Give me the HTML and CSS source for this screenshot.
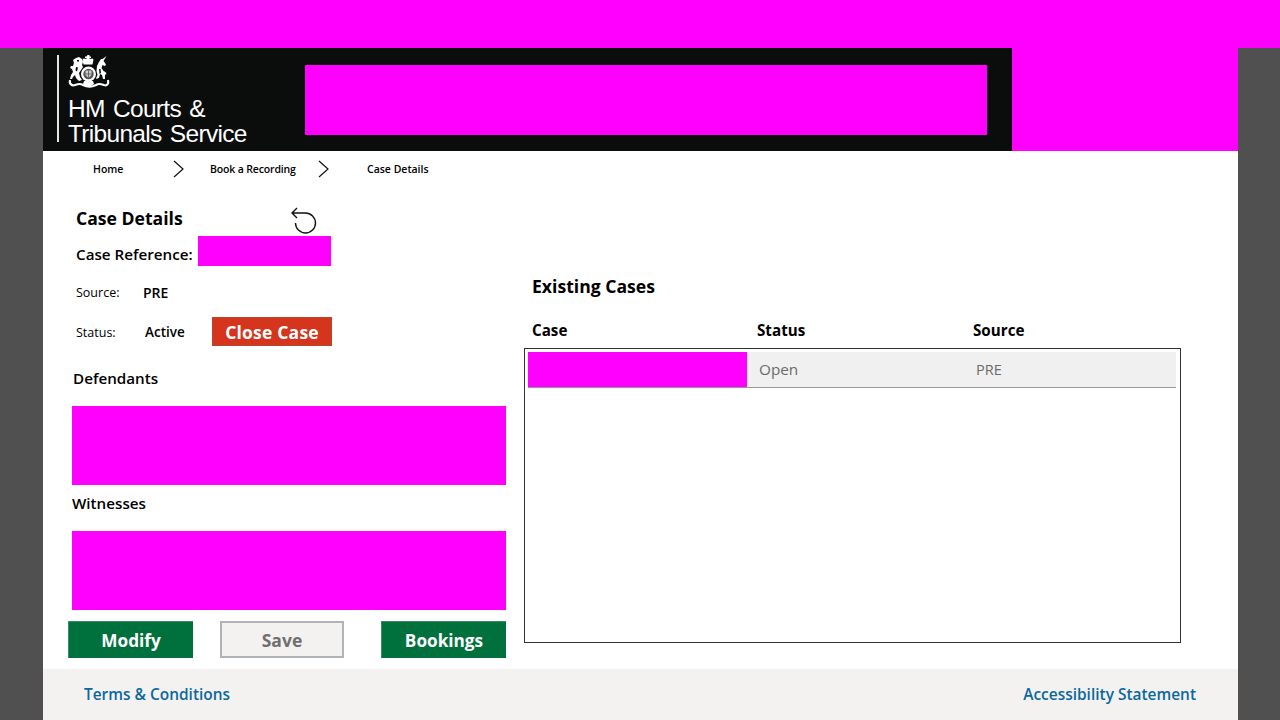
FILE: index.html
```html
<!DOCTYPE html>
<html lang="en">
<head>
  <meta charset="UTF-8" />
  <meta name="viewport" content="width=device-width, initial-scale=1" />
  <title>Case Details</title>
  <link rel="stylesheet" href="styles.css">
</head>
<body>
  <div class="topbar"></div>
  <div class="page">
    <header class="header">
      <div class="brand">
        <div class="brand-rule"></div>
        <div class="brand-text">
          <svg class="crest" viewBox="0 0 42 36" aria-hidden="true">
            <!-- crown -->
            <path fill="#fff" d="M19.500 0h2v1.500h1.500v1.500h-1.500v1l3-.5 1 1-1 5h-9l-1-5 1-1 3 .5v-1h-1.500v-1.500h1.500z"/>
            <!-- garter and shield -->
            <circle cx="20.500" cy="19" r="7.500" fill="#fff"/>
            <circle cx="20.500" cy="19" r="5.200" fill="#555"/>
            <path fill="#ccc" d="M17.500 15.500h6v4.500l-3 3-3-3z"/>
            <path fill="none" stroke="#333" stroke-width=".6" d="M20.500 15.500v7.500M17.500 19h6"/>
            <!-- lion -->
            <path fill="#fff" d="M8 3l3-1 3 2 1 3-1 3 1 2-2 3-2 3 1 4 2 3-3 1-3-3-1-3-2 2-1 2h-2l1-4 2-3-1-3-2-1 1-2 2 0 1-3-1-3z"/>
            <path fill="#0b0c0c" d="M9 5h2v1.500h-2zM8 12l2 .5-1 4-1.500-1z"/>
            <!-- unicorn -->
            <path fill="#fff" d="M38.500 1l-3 5 1.500 2 1 2-1.500 1-2-1-1 3 2 3 2 1 1 2-1.500 1 0 4-2 0-1-4-2-1-1 4-3 1 .5-2 1-2-1-4 .5-5 2-4 2-3 1.500 0z"/>
            <path fill="#0b0c0c" d="M31 14l1.500 0 .5 4-1.500 1z"/>
            <!-- ribbon -->
            <path fill="none" stroke="#fff" stroke-width="2.200" d="M2 25c-1 4 2 6 5 5 3-1 5-2 8 0 4 2 9 2 13 0 3-2 5-1 8 0 3 1 5-1 4-5"/>
            <path fill="#fff" d="M16 26h9l1 3-3 2h-5l-3-2z"/>
          </svg>
          <div class="brand-name">HM Courts &amp;<br>Tribunals Service</div>
        </div>
        <div class="mask mask-title"></div>
      </div>
      <div class="mask header-mask"></div>
    </header>

    <nav class="crumbs">
      <span class="crumb crumb-home">Home</span>
      <svg class="chevron chevron-one" viewBox="0 0 11 18"><path d="M1 1l9 8-9 8" /></svg>
      <span class="crumb crumb-book">Book a Recording</span>
      <svg class="chevron chevron-two" viewBox="0 0 11 18"><path d="M1 1l9 8-9 8" /></svg>
      <span class="crumb crumb-case">Case Details</span>
    </nav>

    <main class="content">
      <section class="details">
        <div class="title-row">
          <h1 class="title title-details">Case Details</h1>
          <svg class="undo" viewBox="0 0 26 27"><path d="M6 1L1 6l5 5M1 6h13.500a10 10 0 1 1-10 10" /></svg>
        </div>
        <div class="ref-row">
          <span class="ref-label">Case Reference:</span>
          <div class="mask mask-ref"></div>
        </div>
        <div class="info-row info-source">
          <span class="info-label">Source:</span>
          <span class="info-value">PRE</span>
        </div>
        <div class="info-row info-status">
          <span class="info-label">Status:</span>
          <span class="info-value info-active">Active</span>
          <button class="btn btn-close">Close Case</button>
        </div>
        <h2 class="group-title group-defendants">Defendants</h2>
        <div class="mask mask-people"></div>
        <h2 class="group-title group-witnesses">Witnesses</h2>
        <div class="mask mask-people"></div>
        <div class="actions">
          <button class="btn btn-green">Modify</button>
          <button class="btn btn-save">Save</button>
          <button class="btn btn-green">Bookings</button>
        </div>
      </section>

      <section class="cases">
        <h2 class="title">Existing Cases</h2>
        <div class="case-cols">
          <span class="col-case">Case</span>
          <span class="col-status">Status</span>
          <span>Source</span>
        </div>
        <div class="case-list">
          <div class="case-row">
            <div class="mask mask-case"></div>
            <span class="cell-status">Open</span>
            <span>PRE</span>
          </div>
        </div>
      </section>
    </main>

    <footer class="footer">
      <a class="footer-link">Terms &amp; Conditions</a>
      <a class="footer-link">Accessibility Statement</a>
    </footer>
  </div>
</body>
</html>
```

FILE: styles.css
```css
* {
  box-sizing: border-box;
}
html, body {
  height: 100%;
}
body {
  margin: 0;
  overflow: hidden;
  background-color: #505050;
  color: #000;
  font-family: "Open Sans", Arial, sans-serif;
}
.mask {
  background-color: #ff00ff;
}
.topbar {
  height: 48px;
  background-color: #ff00ff;
}
.page {
  width: 1195px;
  height: 672px;
  margin-left: 43px;
  background-color: #fff;
  display: flex;
  flex-direction: column;
}

/* header */
.header {
  display: flex;
  height: 103px;
}
.brand {
  width: 969px;
  padding: 7px 25px 7px 14px;
  background-color: #0b0c0c;
  display: flex;
  color: #fff;
}
.brand-rule {
  width: 2px;
  height: 87px;
  background-color: #e6e6e6;
}
.brand-text {
  width: 246px;
  padding-left: 9px;
}
.crest {
  display: block;
  width: 42px;
  height: 36px;
}
.brand-name {
  margin-top: 5px;
  font-family: "Liberation Sans", Arial, sans-serif;
  font-size: 24.500px;
  line-height: 25px;
  letter-spacing: -0.7px;
  word-spacing: 2.2px;
  white-space: nowrap;
}
.mask-title {
  width: 682px;
  height: 70px;
  margin-top: 10px;
}
.header-mask {
  flex: 1;
}

/* breadcrumb */
.crumbs {
  height: 36px;
  padding-bottom: 1px;
  display: flex;
  align-items: center;
  font-size: 10.500px;
  font-weight: 600;
  white-space: nowrap;
}
.crumb-home {
  margin-left: 50px;
  width: 80px;
}
.chevron {
  width: 11px;
  height: 18px;
  flex: none;
  margin-top: 1px;
}
.chevron path {
  fill: none;
  stroke: #111;
  stroke-width: 1.200;
}
.chevron-one {
  margin-right: 26px;
}
.crumb-book {
  width: 108px;
  letter-spacing: -0.15px;
}
.chevron-two {
  margin-right: 38px;
}

/* content */
.content {
  flex: 1;
  display: flex;
}
.details {
  width: 434px;
  margin-left: 29px;
}
.title-row {
  height: 49px;
  padding: 19px 0 0 4px;
  display: flex;
}
.title {
  margin: 0;
  font-size: 17.600px;
  line-height: 24px;
  font-weight: 700;
}
.title-details {
  width: 108px;
}
.undo {
  width: 26px;
  height: 27px;
  margin: 1px 0 0 107px;
  flex: none;
}
.undo path {
  fill: none;
  stroke: #111;
  stroke-width: 1.400;
}
.ref-row {
  height: 30px;
  padding-left: 4px;
  display: flex;
}
.ref-label {
  width: 122px;
  padding-top: 8px;
  font-size: 15.200px;
  line-height: 21px;
  font-weight: 600;
}
.mask-ref {
  width: 133px;
  height: 30px;
}
.info-row {
  display: flex;
  align-items: center;
  padding-left: 4px;
  font-size: 14px;
  font-weight: 600;
}
.info-source {
  height: 48px;
  margin-top: 2px;
}
.info-status {
  height: 30px;
  margin-top: 1px;
}
.info-label {
  width: 67px;
  font-size: 12.500px;
  font-weight: 400;
}
.info-status .info-label {
  width: 69px;
}
.info-active {
  width: 67px;
  font-size: 13.500px;
}
.btn {
  font-family: inherit;
  font-size: 17.500px;
  font-weight: 700;
  padding: 0;
  border-radius: 0;
  color: #fff;
  cursor: pointer;
}
.btn-close {
  width: 120px;
  height: 29px;
  margin-top: -2px;
  padding-top: 1px;
  letter-spacing: 0.2px;
  background-color: #d4351c;
  border: 1px solid #b5472f;
}
.group-title {
  margin: 0;
  font-size: 15.200px;
  line-height: 20px;
  font-weight: 600;
}
.group-defendants {
  margin: 21px 0 18px 1px;
}
.group-witnesses {
  margin: 8px 0 18px;
}
.mask-people {
  height: 79px;
}
.actions {
  margin: 11px 0 0 -4px;
  width: 438px;
  display: flex;
  justify-content: space-between;
}
.btn-green {
  width: 125px;
  height: 37px;
  font-size: 17.200px;
  background-color: #00703c;
  border: 1px solid #3d8a63;
  border-width: 1px 0 0 1px;
}
.btn-save {
  width: 124px;
  height: 37px;
  margin-left: 2px;
  margin-right: 12px;
  background-color: #f3f2f1;
  border: 2px solid #b1b4b6;
  color: #6f6f6f;
}

/* existing cases */
.cases {
  width: 657px;
  margin-left: 18px;
  padding-top: 87px;
}
.cases .title {
  margin-left: 8px;
}
.case-cols {
  display: flex;
  margin: 22px 0 8px 8px;
  font-size: 15.200px;
  line-height: 20px;
  font-weight: 700;
}
.col-case {
  width: 225px;
}
.col-status {
  width: 216px;
}
.case-list {
  height: 295px;
  padding: 3px 4px 3px 3px;
  border: 1px solid #333;
}
.case-row {
  height: 36px;
  padding-bottom: 1px;
  display: flex;
  align-items: center;
  background-color: #f0f0f0;
  border-bottom: 1px solid #999;
  color: #6b6b6b;
  font-size: 14.500px;
}
.mask-case {
  width: 219px;
  height: 35px;
}
.cell-status {
  width: 229px;
  padding-left: 12px;
  font-size: 15.300px;
}

/* footer */
.footer {
  height: 51px;
  padding: 0 42px 2px 41px;
  background-color: #f3f2f1;
  display: flex;
  align-items: center;
  justify-content: space-between;
}
.footer-link {
  color: #0b689e;
  font-size: 15.450px;
  font-weight: 600;
}
```
